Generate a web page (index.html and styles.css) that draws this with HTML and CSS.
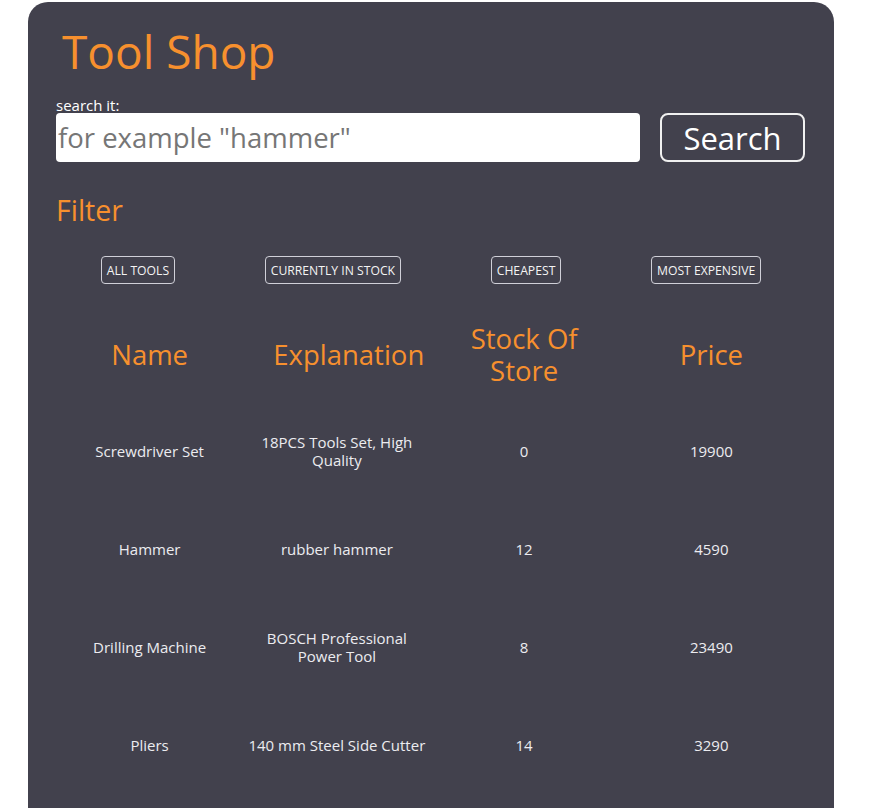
FILE: index.html
```html
<!DOCTYPE html>
<html lang="en">
<head>
<meta charset="utf-8">
<title>Tool Shop</title>
<link rel="stylesheet" href="styles.css">
</head>
<body>
<main class="panel">
  <h1 class="title">Tool Shop</h1>
  <label class="search-label" for="q">search it:</label>
  <div class="search-row">
    <input id="q" class="search-input" type="text" placeholder="for example &quot;hammer&quot;">
    <button class="search-btn">Search</button>
  </div>
  <h2 class="filter-title">Filter</h2>
  <div class="filters">
    <button class="filter-btn">ALL TOOLS</button>
    <button class="filter-btn">CURRENTLY IN STOCK</button>
    <button class="filter-btn">CHEAPEST</button>
    <button class="filter-btn">MOST EXPENSIVE</button>
  </div>
  <table class="tools">
    <thead>
      <tr><th>Name</th><th>Explanation</th><th>Stock Of Store</th><th>Price</th></tr>
    </thead>
    <tbody>
      <tr><td>Screwdriver Set</td><td>18PCS Tools Set, High Quality</td><td>0</td><td>19900</td></tr>
      <tr><td>Hammer</td><td>rubber hammer</td><td>12</td><td>4590</td></tr>
      <tr><td>Drilling Machine</td><td>BOSCH Professional Power Tool</td><td>8</td><td>23490</td></tr>
      <tr><td>Pliers</td><td>140 mm Steel Side Cutter</td><td>14</td><td>3290</td></tr>
    </tbody>
  </table>
</main>
</body>
</html>
```
FILE: styles.css
```css
html, body {
  margin: 0;
  padding: 0;
  background: #ffffff;
}
body {
  font-family: "Open Sans", "Lato", sans-serif;
  height: 808px;
  overflow: hidden;
}
.panel {
  box-sizing: border-box;
  width: 806px;
  margin: 2px 0 0 28px;
  min-height: 900px;
  padding: 0 28px;
  background: #42414d;
  border-radius: 20px 20px 0 0;
  color: #ececf0;
  display: flex;
  flex-direction: column;
}
.title {
  margin: 20px 0 0 6px;
  font-size: 46px;
  line-height: 58px;
  font-weight: 400;
  color: #f7902e;
}
.search-label {
  margin-top: 18px;
  font-size: 15px;
  line-height: 15px;
  color: #ffffff;
}
.search-row {
  display: flex;
  gap: 20px;
  align-items: center;
}
.search-input {
  box-sizing: border-box;
  width: 584px;
  height: 49px;
  border: none;
  border-radius: 4px;
  padding: 0 2px;
  font-family: inherit;
  font-size: 27.5px;
  color: #333;
  background: #fff;
}
.search-input::placeholder {
  color: #767676;
}
.search-btn {
  box-sizing: border-box;
  width: 145px;
  height: 49px;
  background: transparent;
  border: 2px solid #f0f0f0;
  border-radius: 8px;
  color: #ffffff;
  font-family: inherit;
  font-size: 31px;
  line-height: 40px;
  padding: 0;
}
.filter-title {
  margin: 31px 0 0 0;
  font-size: 28.5px;
  line-height: 34px;
  font-weight: 400;
  color: #f7902e;
}
.filters {
  display: flex;
  justify-content: space-around;
  margin-top: 29px;
}
.filter-btn {
  box-sizing: border-box;
  height: 28px;
  padding: 0 5px;
  background: transparent;
  border: 1px solid #d0d0d8;
  border-radius: 4px;
  color: #f4f4f4;
  font-family: inherit;
  font-size: 12.2px;
}
.tools {
  width: 749px;
  table-layout: fixed;
  border-collapse: collapse;
  margin-top: 24px;
}
.tools th {
  height: 94px;
  padding: 0 30px;
  font-size: 27.5px;
  line-height: 32px;
  font-weight: 400;
  color: #f7902e;
  text-align: center;
  vertical-align: middle;
}
.tools td {
  height: 98px;
  padding: 0 2px;
  font-size: 15px;
  line-height: 18px;
  color: #ececf0;
  text-align: center;
  vertical-align: middle;
}
```
